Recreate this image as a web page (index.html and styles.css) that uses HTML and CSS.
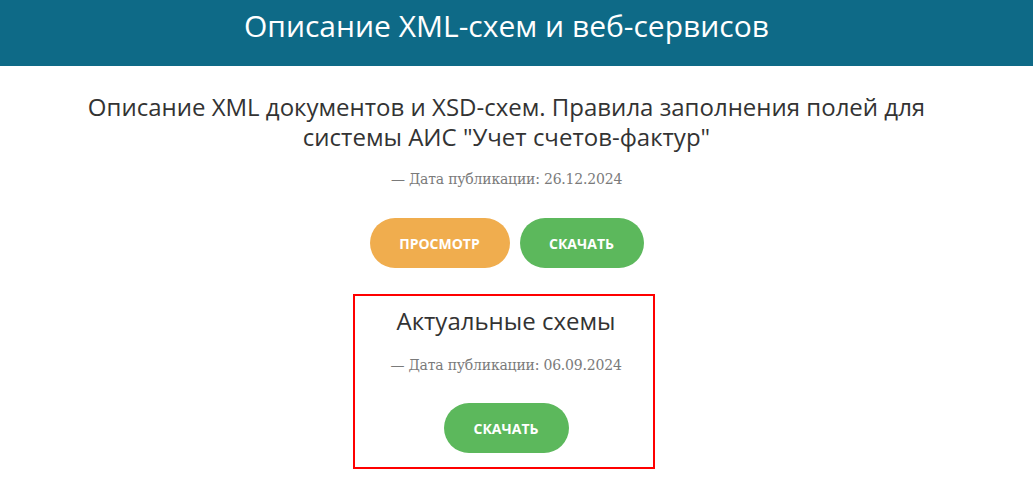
FILE: index.html
```html
<!DOCTYPE html>
<html lang="ru">
<head>
<meta charset="utf-8">
<link rel="stylesheet" href="styles.css">
</head>
<body>
<header class="top">
  <h1 class="top-title">Описание XML-схем и веб-сервисов</h1>
</header>
<main class="content">
  <h2 class="doc-title">Описание XML документов и XSD-схем. Правила заполнения полей для системы АИС "Учет счетов-фактур"</h2>
  <p class="date">— Дата публикации: 26.12.2024</p>
  <div class="buttons">
    <a class="btn btn-orange" href="#">Просмотр</a>
    <a class="btn btn-green" href="#">Скачать</a>
  </div>
  <section class="actual">
    <h3 class="actual-title">Актуальные схемы</h3>
    <p class="date">— Дата публикации: 06.09.2024</p>
    <div class="buttons">
      <a class="btn btn-green" href="#">Скачать</a>
    </div>
  </section>
</main>
</body>
</html>
```

FILE: styles.css
```css
* { box-sizing: border-box; }
html, body { margin: 0; padding: 0; background: #fff; }
body { font-family: "Open Sans", "Noto Sans", sans-serif; color: #333; }
.top {
  background: #0e6a87;
  height: 66px;
  display: flex;
  justify-content: center;
  padding-top: 6px;
  padding-right: 20px;
}
.top-title {
  margin: 0;
  color: #fff;
  font-weight: 400;
  font-size: 30px;
  line-height: 40px;
}
.content {
  display: flex;
  flex-direction: column;
  align-items: center;
  padding-top: 26px;
  padding-right: 20px;
}
.doc-title {
  margin: 0;
  width: 860px;
  text-align: center;
  font-weight: 400;
  font-size: 24px;
  line-height: 30px;
  color: #333;
}
.date {
  margin: 0;
  font-family: "DejaVu Serif", serif;
  font-size: 14px;
  line-height: 18px;
  letter-spacing: -0.2px;
  color: #7a7a7a;
  text-align: center;
}
.content > .date { margin-top: 18px; }
.buttons {
  display: flex;
  gap: 10px;
  justify-content: center;
  margin-top: 30px;
}
.btn {
  display: flex;
  align-items: center;
  justify-content: center;
  height: 50px;
  border-radius: 25px;
  color: #fff;
  text-decoration: none;
  text-transform: uppercase;
  font-weight: 700;
  font-size: 14px;
}
.btn-orange { background: #f0ad4e; width: 140px; }
.btn-green { background: #5cb85c; width: 124px; }
.actual {
  margin-top: 26px;
  margin-right: 5px;
  width: 302px;
  height: 175px;
  border: 2px solid #f00;
  display: flex;
  flex-direction: column;
  align-items: center;
  padding-top: 10px;
  padding-left: 4px;
}
.actual-title {
  margin: 0;
  font-weight: 400;
  font-size: 24px;
  line-height: 30px;
  color: #333;
}
.actual .date { margin-top: 20px; }
.actual .buttons { margin-top: 29px; }
.actual .btn-green { width: 125px; }
```
